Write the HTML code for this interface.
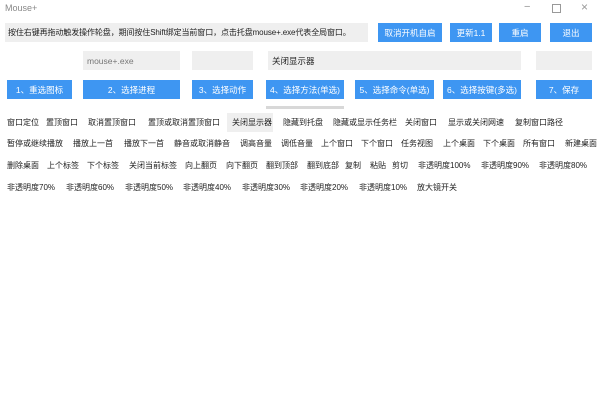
<!DOCTYPE html>
<html><head><meta charset="utf-8"><style>
body{margin:0;width:600px;height:405px;background:#fff;position:relative;overflow:hidden;font-family:"Liberation Sans","Noto Sans CJK SC",sans-serif;}
.a{position:absolute;white-space:nowrap;}
.b{position:absolute;background:#3e96f2;color:#fff;font-size:8.5px;display:flex;align-items:center;justify-content:center;white-space:nowrap;}
.g{position:absolute;background:#efefef;font-size:8.5px;display:flex;align-items:center;color:#222;white-space:nowrap;}
.c{position:absolute;font-size:8px;color:#222;white-space:nowrap;}
</style></head><body>
<div class="a" style="left:5px;top:3px;font-size:9px;color:#888">Mouse+</div>
<div class="a" style="left:524px;top:1px;font-size:11px;color:#999">−</div>
<div class="a" style="left:552px;top:4px;width:7px;height:7px;border:1px solid #999"></div>
<div class="a" style="left:581px;top:0px;font-size:12px;color:#999">×</div>
<div class="g" style="left:5px;top:23px;width:360px;height:19px;padding-left:3px;font-size:8px;letter-spacing:-0.1px">按住右键再拖动触发操作轮盘，期间按住Shift绑定当前窗口，点击托盘mouse+.exe代表全局窗口。</div>
<div class="b" style="left:378px;top:23px;width:64px;height:19px">取消开机自启</div>
<div class="b" style="left:450px;top:23px;width:42px;height:19px">更新1.1</div>
<div class="b" style="left:499px;top:23px;width:42px;height:19px">重启</div>
<div class="b" style="left:550px;top:23px;width:42px;height:19px">退出</div>
<div class="g" style="left:83px;top:51px;width:93px;height:19px;padding-left:4px;color:#777">mouse+.exe</div>
<div class="g" style="left:192px;top:51px;width:61px;height:19px"></div>
<div class="g" style="left:268px;top:51px;width:249px;height:19px;padding-left:4px">关闭显示器</div>
<div class="g" style="left:536px;top:51px;width:56px;height:19px"></div>
<div class="b" style="left:7px;top:80px;width:65px;height:19px">1、重选图标</div>
<div class="b" style="left:83px;top:80px;width:97px;height:19px">2、选择进程</div>
<div class="b" style="left:192px;top:80px;width:61px;height:19px">3、选择动作</div>
<div class="b" style="left:266px;top:80px;width:78px;height:19px">4、选择方法(单选)</div>
<div class="b" style="left:355px;top:80px;width:79px;height:19px">5、选择命令(单选)</div>
<div class="b" style="left:443px;top:80px;width:78px;height:19px">6、选择按键(多选)</div>
<div class="b" style="left:536px;top:80px;width:56px;height:19px">7、保存</div>
<div class="a" style="left:266px;top:106px;width:78px;height:3px;background:#d8d8d8"></div>
<div class="a" style="left:227px;top:113px;width:46px;height:19px;background:#efefef"></div>
<div class="c" style="left:7px;top:117px">窗口定位</div><div class="c" style="left:46px;top:117px">置顶窗口</div><div class="c" style="left:88px;top:117px">取消置顶窗口</div><div class="c" style="left:148px;top:117px">置顶或取消置顶窗口</div><div class="c" style="left:232px;top:117px">关闭显示器</div><div class="c" style="left:283px;top:117px">隐藏到托盘</div><div class="c" style="left:333px;top:117px">隐藏或显示任务栏</div><div class="c" style="left:405px;top:117px">关闭窗口</div><div class="c" style="left:448px;top:117px">显示或关闭网速</div><div class="c" style="left:515px;top:117px">复制窗口路径</div>
<div class="c" style="left:7px;top:138px">暂停或继续播放</div><div class="c" style="left:73px;top:138px">播放上一首</div><div class="c" style="left:124px;top:138px">播放下一首</div><div class="c" style="left:174px;top:138px">静音或取消静音</div><div class="c" style="left:240px;top:138px">调高音量</div><div class="c" style="left:281px;top:138px">调低音量</div><div class="c" style="left:321px;top:138px">上个窗口</div><div class="c" style="left:361px;top:138px">下个窗口</div><div class="c" style="left:401px;top:138px">任务视图</div><div class="c" style="left:443px;top:138px">上个桌面</div><div class="c" style="left:483px;top:138px">下个桌面</div><div class="c" style="left:523px;top:138px">所有窗口</div><div class="c" style="left:565px;top:138px">新建桌面</div>
<div class="c" style="left:7px;top:160px">删除桌面</div><div class="c" style="left:47px;top:160px">上个标签</div><div class="c" style="left:87px;top:160px">下个标签</div><div class="c" style="left:129px;top:160px">关闭当前标签</div><div class="c" style="left:185px;top:160px">向上翻页</div><div class="c" style="left:226px;top:160px">向下翻页</div><div class="c" style="left:266px;top:160px">翻到顶部</div><div class="c" style="left:307px;top:160px">翻到底部</div><div class="c" style="left:345px;top:160px">复制</div><div class="c" style="left:370px;top:160px">粘贴</div><div class="c" style="left:392px;top:160px">剪切</div><div class="c" style="left:418px;top:160px">非透明度100%</div><div class="c" style="left:481px;top:160px">非透明度90%</div><div class="c" style="left:539px;top:160px">非透明度80%</div>
<div class="c" style="left:7px;top:182px">非透明度70%</div><div class="c" style="left:66px;top:182px">非透明度60%</div><div class="c" style="left:125px;top:182px">非透明度50%</div><div class="c" style="left:183px;top:182px">非透明度40%</div><div class="c" style="left:242px;top:182px">非透明度30%</div><div class="c" style="left:300px;top:182px">非透明度20%</div><div class="c" style="left:359px;top:182px">非透明度10%</div><div class="c" style="left:417px;top:182px">放大镜开关</div>
</body></html>
